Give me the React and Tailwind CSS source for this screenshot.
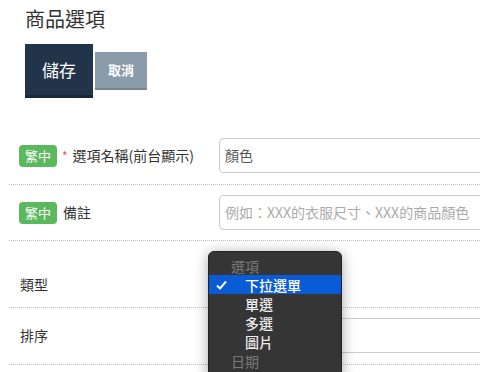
const font = { fontFamily: '"Noto Sans CJK TC", "Noto Sans", sans-serif' };

function Badge() {
  return (
    <span className="inline-flex h-[22px] w-[38px] items-center justify-center rounded-[4px] bg-[#5cb85c] text-[13px] leading-none text-white">
      繁中
    </span>
  );
}

function Input({ value, placeholder }) {
  return (
    <div className="flex h-[35px] w-[300px] shrink-0 items-center rounded-[4px] border border-[#ccc] bg-white px-[5px] text-[14px]">
      {value ? (
        <span className="text-[#555]">{value}</span>
      ) : (
        <span className="text-[#aaa]">{placeholder}</span>
      )}
    </div>
  );
}

const options = [
  { label: "選項", group: true },
  { label: "下拉選單", selected: true },
  { label: "單選" },
  { label: "多選" },
  { label: "圖片" },
  { label: "日期", group: true },
];

export default function App() {
  return (
    <div className="relative h-[372px] w-[480px] overflow-hidden bg-white" style={font}>
      <div className="px-[25px] pt-[5px]">
        <h1 className="text-[20px] leading-[28px] text-[#333]">商品選項</h1>
        <div className="mt-[11px] flex items-center gap-[2px]">
          <button className="flex h-[54px] w-[68px] items-center justify-center border-b-[3px] border-[#1a2838] bg-[#22344a] text-[17px] text-white">
            儲存
          </button>
          <button className="flex h-[38px] w-[52px] items-center justify-center border-b-[2px] border-[#758593] bg-[#8a9caa] text-[13px] font-bold text-white">
            取消
          </button>
        </div>
      </div>

      <div className="mt-[29px] w-[520px] pl-[9px]">
        <div className="flex items-center border-b border-dotted border-[#bbb] py-[11px] pl-[10px]">
          <div className="flex w-[200px] shrink-0 items-center">
            <Badge />
            <span className="ml-[5px] text-[12px] text-[#e55]">*</span>
            <span className="ml-[5px] text-[14px] text-[#333]">選項名稱(前台顯示)</span>
          </div>
          <Input value="顏色" />
        </div>

        <div className="flex items-center border-b border-dotted border-[#bbb] py-[10px] pl-[10px]">
          <div className="flex w-[200px] shrink-0 items-center">
            <Badge />
            <span className="ml-[6px] text-[14px] text-[#333]">備註</span>
          </div>
          <Input placeholder="例如：XXX的衣服尺寸、XXX的商品顏色" />
        </div>

        <div className="flex h-[67px] items-center border-b border-dotted border-[#bbb] pl-[11px] pt-[20px]">
          <span className="text-[14px] text-[#333]">類型</span>
        </div>

        <div className="flex items-center border-b border-dotted border-[#bbb] pt-[10px] pb-[11px] pl-[11px]">
          <div className="w-[199px] shrink-0 text-[14px] text-[#333]">排序</div>
          <Input />
        </div>
      </div>

      <div className="absolute left-[208px] top-[251px] w-[134px] rounded-t-[6px] border border-[#222] bg-[#353535] pt-[4px] pb-[10px] shadow-[0_2px_14px_rgba(0,0,0,0.35)]">
        {options.map((o) => (
          <div
            key={o.label}
            className={`flex h-[19px] items-center text-[14px] leading-none ${
              o.selected
                ? "bg-[#0a5bd6] font-medium text-white"
                : o.group
                  ? "text-[#7a7a7a]"
                  : "font-medium text-[#ececec]"
            }`}
          >
            <span className="flex w-[22px] justify-center pl-[2px]">
              {o.selected && (
                <svg width="11" height="10" viewBox="0 0 11 10">
                  <path d="M1 5.5 L4 8.5 L10 1.5" fill="none" stroke="white" strokeWidth="2" />
                </svg>
              )}
            </span>
            <span className={o.group ? "ml-[0px]" : "ml-[14px]"}>{o.label}</span>
          </div>
        ))}
      </div>
    </div>
  );
}
